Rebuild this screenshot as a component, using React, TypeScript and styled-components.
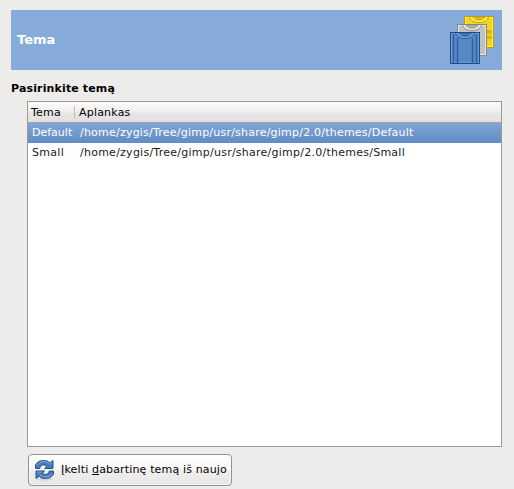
import React from "react";
import styled, { createGlobalStyle } from "styled-components";

const GlobalStyle = createGlobalStyle`
  * { box-sizing: border-box; }
  body {
    margin: 0;
    background: #edeceb;
    font-family: "DejaVu Sans", sans-serif;
    font-size: 11px;
    color: #000;
  }
`;

const Page = styled.main`
  display: flex;
  flex-direction: column;
  width: 514px;
  height: 489px;
  padding: 10px 12px 3px 11px;
  overflow: hidden;
`;

const Banner = styled.header`
  display: flex;
  align-items: center;
  justify-content: space-between;
  height: 60px;
  padding: 0 6px;
  background: #86abd9;
`;

const Title = styled.h1`
  margin: 0;
  color: #fff;
  font-size: 13px;
  line-height: 16px;
`;

const SectionTitle = styled.h2`
  margin: 11px 0 4px;
  font-size: 11px;
  line-height: 16px;
  letter-spacing: 0.14px;
`;

const ThemeList = styled.div`
  width: 475px;
  height: 346px;
  margin-left: 16px;
  border: 1px solid #9c9a98;
  background: #fff;
`;

const HeaderRow = styled.div`
  display: flex;
  height: 21px;
  border-bottom: 1px solid #a5a19d;
  background: linear-gradient(#fbfbfa 0, #efeeed 10px, #e7e6e4 11px, #e2e1df 20px);
`;

const HeaderCell = styled.div<{ $divided?: boolean }>`
  position: relative;
  width: ${(p) => (p.$divided ? "47px" : "auto")};
  padding-left: ${(p) => (p.$divided ? "3px" : "4px")};
  line-height: 21px;
  letter-spacing: 0.2px;
  &::after {
    content: ${(p) => (p.$divided ? '""' : "none")};
    position: absolute;
    right: 0;
    top: 4px;
    height: 13px;
    border-right: 1px solid #c0bdb9;
  }
`;

const Row = styled.div<{ $selected?: boolean }>`
  display: grid;
  grid-template-columns: 48px 1fr;
  height: 20px;
  padding-left: 4px;
  line-height: 19px;
  white-space: nowrap;
  color: ${(p) => (p.$selected ? "#fff" : "#1a1a1a")};
  background: ${(p) => (p.$selected ? "linear-gradient(#80a6d9, #628cc4)" : "#fff")};
`;

const ThemeName = styled.span<{ $tracking: string }>`
  letter-spacing: ${(p) => p.$tracking};
`;

const FolderPath = styled.span<{ $tracking: string }>`
  letter-spacing: ${(p) => p.$tracking};
`;

const ReloadButton = styled.button`
  display: flex;
  align-items: center;
  gap: 5px;
  width: 204px;
  height: 32px;
  margin: 7px 0 0 17px;
  padding: 0 0 0 5px;
  border: 1px solid #95918c;
  border-radius: 4px;
  background: linear-gradient(#fff 0, #f8f8f7 50%, #efeeed 54%, #e8e7e5 100%);
  box-shadow: inset 0 0 0 1px #ffffff99;
  font: inherit;
  letter-spacing: 0.155px;
  white-space: nowrap;
`;

const ButtonLabel = styled.span`
  padding-bottom: 2px;
`;

const shirts = [
  { id: "yellow", x: 18, y: 2, edge: "#c19c05", fill: "#f2d51f", light: "#fff067", dark: "#c9a60d" },
  { id: "grey", x: 11, y: 10, edge: "#858783", fill: "#c1c2bf", light: "#e6e6e5", dark: "#969894" },
  { id: "blue", x: 4, y: 18, edge: "#204a87", fill: "#5789c5", light: "#6c9cd5", dark: "#30619f" },
];

const ThemeIcon = () => (
  <svg width="50" height="52" viewBox="0 0 50 52" aria-hidden="true">
    {shirts.map((s) => (
      <g key={s.id} transform={`translate(${s.x} ${s.y})`}>
        <path d="M.5 .5h29v31H.5z" fill={s.fill} stroke={s.edge} />
        <path d="M1.5 30.5v-29h27v29z" fill="none" stroke={s.light} />
        {s.id === "yellow" && <path d="M2 14h26v4H2zM2 20h26v3H2z" fill="#d9b810" />}
        {s.id === "blue" && (
          <path
            d="M3.5 2v29M7.5 6v25M22.5 6v25M26.5 2v29"
            stroke="#30609f"
            strokeWidth="1.4"
          />
        )}
        <path d="M5.5 1c1.5 7.5 17.5 7.5 19 0" fill={s.light} stroke={s.dark} />
        <path d="M8.5 1c1.5 4.5 11.5 4.5 13 0z" fill={s.dark} />
        <path d="M9.5 2.3h11" stroke={s.fill} />
        <path d="M0 .5h30" stroke={s.edge} />
      </g>
    ))}
  </svg>
);

const ReloadIcon = () => (
  <svg width="22" height="22" viewBox="0 0 22 22" aria-hidden="true">
    <ellipse cx="10.5" cy="20.3" rx="8" ry="1.4" fill="#d4d3d0" />
    <g fill="#4779b8" stroke="#28528c" strokeWidth="1" strokeLinejoin="round">
      <path d="M1.5 9.5V6C3.5 2.5 6.5 1.5 9.5 1.5c2.7 0 4.7 .7 6.3 2.3L19 1.5v8h-8.5l2.3-2.3C10 5.2 6.5 5.8 5.7 9.5z" />
      <path d="M19.5 12V15c-2 3.5-5 4.5-8 4.5-2.7 0-4.7-.7-6.3-2.3L2 19.5V12h8.5l-2.3 2.2c2.8 2 6.3 1.4 7.1-2.2z" />
    </g>
    <path d="M2.8 6.5C6 2 12 1.5 15.8 5.2L18 3.7M3.3 13.1h4M18.3 14.6c-3 3.9-9 4.4-12.8 1" fill="none" stroke="#83acdb" />
  </svg>
);

const rows = [
  { name: "Default", selected: true, nameTracking: "0", pathTracking: "0.22px" },
  { name: "Small", selected: false, nameTracking: "0.3px", pathTracking: "0.25px" },
];

export default function App() {
  return (
    <>
      <GlobalStyle />
      <Page>
        <Banner>
          <Title>Tema</Title>
          <ThemeIcon />
        </Banner>
        <SectionTitle>Pasirinkite temą</SectionTitle>
        <ThemeList>
          <HeaderRow>
            <HeaderCell $divided>Tema</HeaderCell>
            <HeaderCell>Aplankas</HeaderCell>
          </HeaderRow>
          {rows.map((r) => (
            <Row key={r.name} $selected={r.selected}>
              <ThemeName $tracking={r.nameTracking}>{r.name}</ThemeName>
              <FolderPath $tracking={r.pathTracking}>
                /home/zygis/Tree/gimp/usr/share/gimp/2.0/themes/{r.name}
              </FolderPath>
            </Row>
          ))}
        </ThemeList>
        <ReloadButton>
          <ReloadIcon />
          <ButtonLabel>
            Įkelti <u>d</u>abartinę temą iš naujo
          </ButtonLabel>
        </ReloadButton>
      </Page>
    </>
  );
}
